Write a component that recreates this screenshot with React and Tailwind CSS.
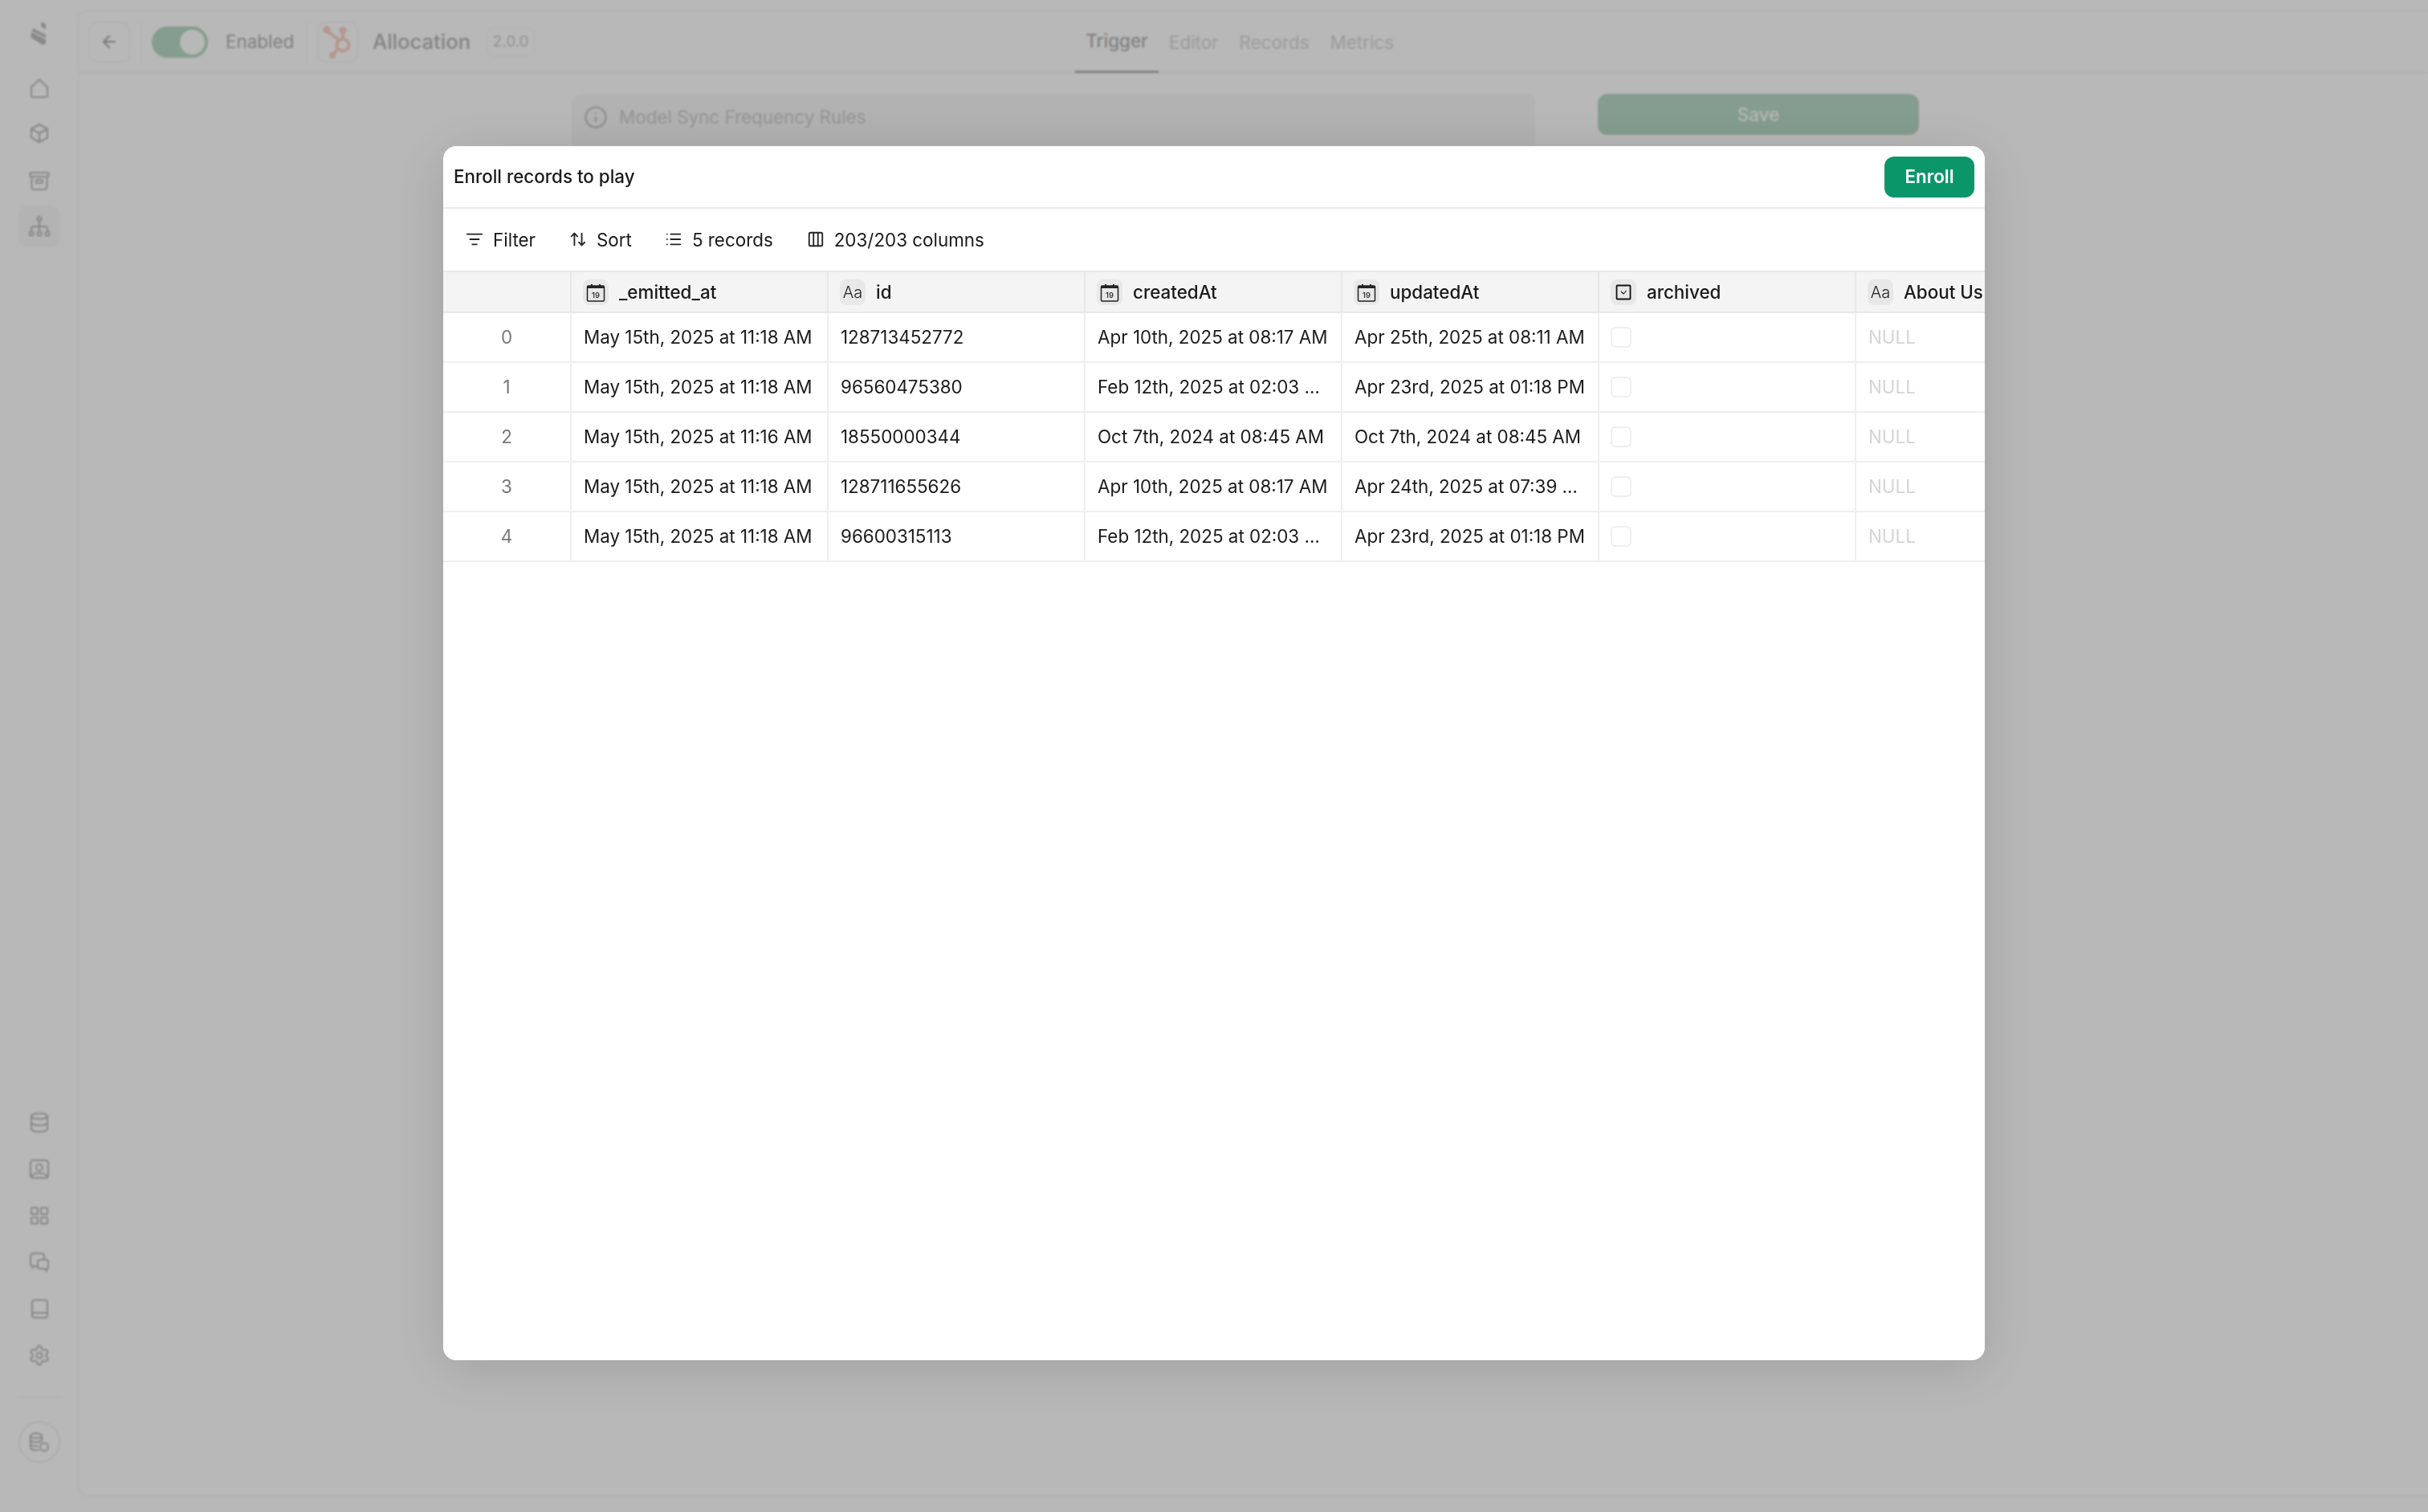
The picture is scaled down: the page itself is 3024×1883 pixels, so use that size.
import React from 'react';
import { ArrowLeft, Info, ListFilter, ArrowUpDown, List, Columns3, Settings } from 'lucide-react';

function NavIcon({ children }) {
  return (
    <svg viewBox="0 0 28 28" className="h-[28px] w-[28px] fill-none stroke-[#bebebe]" strokeWidth="2.100" strokeLinecap="round" strokeLinejoin="round">
      {children}
    </svg>
  );
}

const topNav = [
  { key: 'home', y: 'mt-[29px]', icon: <path d="M4 12.500 14 3l10 9.500V23a2 2 0 0 1-2 2H6a2 2 0 0 1-2-2Z" /> },
  { key: 'box', y: 'mt-[28px]', icon: <><path d="M14 3 24 8.500v11L14 25 4 19.500v-11Z" /><path d="M4 8.500 14 14l10-5.500M14 14v11" /></> },
  { key: 'archive', y: 'mt-[31px]', icon: <><rect x="2.500" y="4" width="23" height="5" rx="1" /><path d="M4.500 9v13a3 3 0 0 0 3 3h13a3 3 0 0 0 3-3V9" /><rect x="10" y="13" width="8" height="4" rx="1" /></> },
];

const bottomNav = [
  { key: 'db', icon: <><ellipse cx="14" cy="6" rx="10" ry="3.500" /><path d="M4 6v16c0 2 4.500 3.500 10 3.500s10-1.500 10-3.500V6M4 14c0 2 4.500 3.500 10 3.500s10-1.500 10-3.500" /></> },
  { key: 'contact', icon: <><rect x="3" y="3" width="22" height="22" rx="3" /><circle cx="14" cy="12" r="4" /><path d="M4 24c1-3.500 5-5 10-5s9 1.500 10 5" /></> },
  { key: 'grid', icon: <><rect x="4" y="4" width="8" height="8" rx="1.500" /><rect x="16" y="4" width="8" height="8" rx="1.500" /><rect x="4" y="16" width="8" height="8" rx="1.500" /><rect x="16" y="16" width="8" height="8" rx="1.500" /></> },
  { key: 'chat', icon: <><path d="M10 19H7l-2 2v-3a3 3 0 0 1-2-3V6a3 3 0 0 1 3-3h11a3 3 0 0 1 3 3v4" /><path d="M12 13a2 2 0 0 1 2-2h9a2 2 0 0 1 2 2v7a2 2 0 0 1-2 2v3l-3-3h-6a2 2 0 0 1-2-2Z" /></> },
  { key: 'book', icon: <><rect x="5" y="3" width="19" height="22" rx="3" /><path d="M5 19h19" /></> },
];

const columns = ['_emitted_at', 'id', 'createdAt', 'updatedAt', 'archived', 'About Us'];

const rows = [
  ['0', 'May 15th, 2025 at 11:18 AM', '128713452772', 'Apr 10th, 2025 at 08:17 AM', 'Apr 25th, 2025 at 08:11 AM'],
  ['1', 'May 15th, 2025 at 11:18 AM', '96560475380', 'Feb 12th, 2025 at 02:03 PM', 'Apr 23rd, 2025 at 01:18 PM'],
  ['2', 'May 15th, 2025 at 11:16 AM', '18550000344', 'Oct 7th, 2024 at 08:45 AM', 'Oct 7th, 2024 at 08:45 AM'],
  ['3', 'May 15th, 2025 at 11:18 AM', '128711655626', 'Apr 10th, 2025 at 08:17 AM', 'Apr 24th, 2025 at 07:39 AM'],
  ['4', 'May 15th, 2025 at 11:18 AM', '96600315113', 'Feb 12th, 2025 at 02:03 PM', 'Apr 23rd, 2025 at 01:18 PM'],
];

function TypeChip({ name }) {
  let glyph;
  if (name === 'id' || name === 'About Us') {
    glyph = <span className="text-[20px] font-light text-[#222]">Aa</span>;
  } else if (name === 'archived') {
    glyph = (
      <svg viewBox="0 0 20 20" className="h-[20px] w-[20px] fill-none stroke-[#111]" strokeWidth="1.800">
        <rect x="1.500" y="1.500" width="17" height="17" rx="1" />
        <path d="m7 9 3 3 3.500-4" strokeWidth="1.100" />
      </svg>
    );
  } else {
    glyph = (
      <svg viewBox="0 0 24 24" className="h-[24px] w-[24px]">
        <rect x="1.500" y="4" width="21" height="19" rx="1.500" fill="none" stroke="#222" strokeWidth="1.500" />
        <path d="M1.500 5.500A1.500 1.500 0 0 1 3 4h3V2h2v2h8V2h2v2h3a1.500 1.500 0 0 1 1.500 1.500V7h-21Z" fill="#222" />
        <text x="12" y="19" textAnchor="middle" fontSize="9.500" fill="#222" fontFamily="Inter">19</text>
      </svg>
    );
  }
  return (
    <span className="flex h-[32px] w-[32px] shrink-0 items-center justify-center rounded-[8px] bg-[#e8e8e8]">
      {glyph}
    </span>
  );
}

function ToolbarItem({ icon, label, className }) {
  return (
    <div className={`flex items-center gap-[12px] ${className}`}>
      {icon}
      <span>{label}</span>
    </div>
  );
}

export default function App() {
  return (
    <div className="relative flex h-[1883px] w-[3024px] overflow-hidden bg-white font-['Inter',sans-serif] text-[22.4px] text-[#1a1a1a]">
      {/* page behind the dialog */}
      <aside className="flex w-[97px] shrink-0 flex-col items-center pt-[15px]">
        <div className="flex h-[52px] w-[52px] items-center justify-center">
          <svg viewBox="0 0 24 26" className="h-[30px] w-[28px] fill-[#bebebe]">
            <path d="M14 1 19 3.500v5.500l-5-2.500ZM3 12l16 8v5l-4 .5L3 18ZM5 8l14 7v3.500L4 11Z" />
          </svg>
        </div>
        {topNav.map((n) => (
          <div key={n.key} className={n.y}>
            <NavIcon>{n.icon}</NavIcon>
          </div>
        ))}
        <div className="mt-[17px] flex h-[52px] w-[52px] items-center justify-center rounded-[12px] bg-[#f9f9f9]">
          <NavIcon>
            <circle cx="14" cy="4.500" r="2.500" />
            <circle cx="4" cy="23" r="2.500" />
            <circle cx="14" cy="23" r="2.500" />
            <circle cx="24" cy="23" r="2.500" />
            <path d="M14 7v13.500M4 20.500V17a3 3 0 0 1 3-3h14a3 3 0 0 1 3 3v3.500" />
          </NavIcon>
        </div>
        <div className="mt-auto flex flex-col items-center gap-[30px]">
          {bottomNav.map((n) => (
            <NavIcon key={n.key}>{n.icon}</NavIcon>
          ))}
          <Settings className="h-[28px] w-[28px] text-[#bebebe]" strokeWidth={1.800} />
        </div>
        <div className="mt-[37px] w-[52px] border-t border-dashed border-[#ededed]" />
        <div className="mb-[61px] mt-[30px] flex h-[52px] w-[52px] items-center justify-center rounded-full border-[2px] border-[#f0f0f0]">
          <NavIcon>
            <ellipse cx="10" cy="6" rx="7" ry="3" />
            <path d="M3 6v15c0 1.700 3 3 7 3h3M17 6v6M3 11c0 1.700 3 3 7 3s7-1.300 7-3M3 16c0 1.700 3 3 7 3h2" />
            <circle cx="20" cy="20" r="5" />
          </NavIcon>
        </div>
      </aside>

      <main className="mb-[20px] mt-[13px] flex flex-1 flex-col rounded-l-[12px] border-b border-l border-t border-[#f2f2f2]">
        <header className="relative flex h-[77px] shrink-0 items-center border-b border-[#f2f2f2] pl-[12px]">
          <div className="flex h-[51px] w-[52px] items-center justify-center rounded-[12px] border border-[#f2f2f2]">
            <ArrowLeft className="h-[24px] w-[24px] text-[#a8a8a8]" strokeWidth={2} />
          </div>
          <div className="ml-[13px] h-[51px] w-px bg-[#f2f2f2]" />
          <div className="ml-[13px] flex h-[39px] w-[70px] items-center justify-end rounded-full bg-[#b8dac6] pr-[4px]">
            <span className="h-[31px] w-[31px] rounded-full bg-[#ffffff]" />
          </div>
          <span className="ml-[22px] w-[86px] text-[22.4px] text-[#b4b4b4]">Enabled</span>
          <div className="ml-[15px] h-[51px] w-px bg-[#f2f2f2]" />
          <div className="ml-[12px] flex h-[51px] w-[51px] items-center justify-center rounded-[12px] border border-[#f2f2f2]">
            <svg viewBox="0 0 44 44" className="h-[44px] w-[44px] fill-none stroke-[#fcd0c4]" strokeWidth="4" strokeLinecap="round">
              <circle cx="28" cy="26" r="7.500" />
              <path d="M23 20 9 9M28 18V9M22 31l-7 8" />
              <circle cx="8" cy="7" r="2.500" fill="#fcd0c4" />
              <circle cx="28" cy="8" r="2.500" fill="#fcd0c4" />
              <circle cx="15" cy="39" r="2" fill="#fcd0c4" />
            </svg>
          </div>
          <span className="ml-[18px] text-[25.6px] font-medium text-[#b8b8b8]">Allocation</span>
          <span className="ml-[20px] flex h-[37px] w-[60px] items-center justify-center rounded-[10px] border border-[#f6f6f6] text-[19px] text-[#cecece]">2.0.0</span>

          <nav className="absolute left-[1241px] top-0 flex h-[77px] text-[22.4px] text-[#d8d8d8]">
            <div className="flex w-[104px] items-center justify-center border-b-[3px] border-[#b4b4b4] font-medium text-[#b4b4b4]">Trigger</div>
            <div className="ml-[13px] flex items-center">Editor</div>
            <div className="ml-[26px] flex items-center">Records</div>
            <div className="ml-[26px] flex items-center">Metrics</div>
          </nav>
        </header>

        <div className="flex items-start pl-[614px] pt-[26px]">
          <div className="flex h-[65px] w-[1200px] items-start rounded-t-[12px] bg-[#f7f7f7] pl-[15px] pt-[14px]">
            <Info className="h-[30px] w-[30px] text-[#c4c4c4]" strokeWidth={1.800} />
            <span className="ml-[14px] text-[22.4px] leading-[30px] text-[#cfcfcf]">Model Sync Frequency Rules</span>
          </div>
          <div className="ml-[78px] flex h-[51px] w-[400px] items-center justify-center rounded-[12px] bg-[#b8dac6] font-medium text-[#ffffff]">Save</div>
        </div>
      </main>

      {/* dialog */}
      <div className="absolute inset-0 flex justify-center bg-black/[0.28] pt-[182px] backdrop-blur-[1px]">
        <div className="flex h-[1512px] w-[1920px] flex-col overflow-hidden rounded-[16px] bg-white shadow-[0_10px_70px_rgba(0,0,0,0.14)]">
          <div className="flex h-[78px] shrink-0 items-center justify-between border-b-2 border-[#ebebeb] px-[13px]">
            <span className="font-medium">Enroll records to play</span>
            <button className="flex h-[51px] w-[112px] items-center justify-center rounded-[12px] bg-[#0a9669] font-semibold text-white">Enroll</button>
          </div>

          <div className="flex h-[77px] shrink-0 items-center pl-[28px]">
            <ToolbarItem icon={<ListFilter className="h-[22px] w-[22px] text-[#222]" strokeWidth={2} />} label="Filter" />
            <ToolbarItem className="ml-[42px]" icon={<ArrowUpDown className="h-[22px] w-[22px] text-[#222]" strokeWidth={2} />} label="Sort" />
            <ToolbarItem className="ml-[41px]" icon={<List className="h-[22px] w-[22px] text-[#222]" strokeWidth={2} />} label="5 records" />
            <ToolbarItem className="ml-[42px]" icon={<Columns3 className="h-[22px] w-[22px] text-[#222]" strokeWidth={2} />} label="203/203 columns" />
          </div>

          <div className="flex h-[53px] shrink-0 border-y-2 border-[#e8e8e8] bg-[#f4f4f4]">
            <div className="w-[160px] shrink-0 border-r-2 border-[#e8e8e8]" />
            {columns.map((c) => (
              <div key={c} className="flex w-[320px] shrink-0 items-center gap-[13px] border-r-2 border-[#e8e8e8] pl-[14px] font-medium">
                <TypeChip name={c} />
                <span className="whitespace-nowrap">{c}</span>
              </div>
            ))}
          </div>

          {rows.map((r) => (
            <div key={r[0]} className="flex h-[62px] shrink-0 border-b-2 border-[#efefef]">
              <div className="flex w-[160px] shrink-0 items-center justify-center border-r-2 border-[#efefef] text-[#777]">{r[0]}</div>
              {r.slice(1).map((v, i) => (
                <div key={i} className="flex w-[320px] shrink-0 items-center border-r-2 border-[#efefef] px-[15px]">
                  <span className="truncate">{v}</span>
                </div>
              ))}
              <div className="flex w-[320px] shrink-0 items-center border-r-2 border-[#efefef] pl-[14px]">
                <span className="h-[26px] w-[26px] rounded-[6px] border-2 border-[#efefef]" />
              </div>
              <div className="flex w-[320px] shrink-0 items-center pl-[15px] text-[#d4d4d4]">NULL</div>
            </div>
          ))}
        </div>
      </div>
    </div>
  );
}
